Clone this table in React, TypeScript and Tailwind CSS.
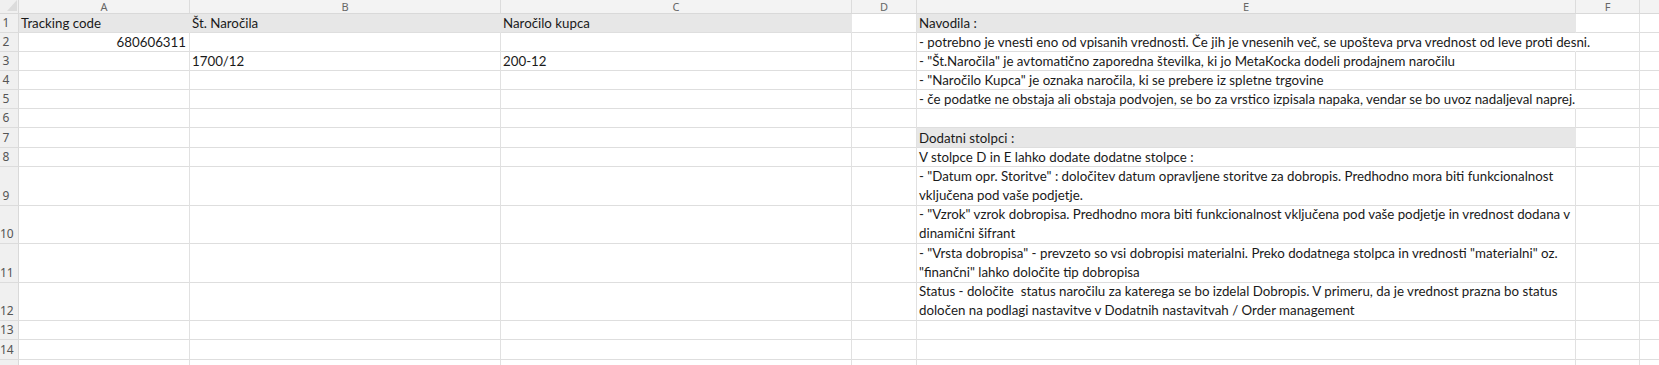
import React from "react";

type Cell = {
  text?: string;
  lines?: string[];
  fill?: boolean;
  right?: boolean;
  overflow?: boolean;
};

type Row = {
  n: number;
  label: boolean;
  h: string;
  cells: Record<string, Cell>;
};

const colDefs: { key: string; w: string }[] = [
  { key: "A", w: "w-[171px]" },
  { key: "B", w: "w-[311px]" },
  { key: "C", w: "w-[351px]" },
  { key: "D", w: "w-[65px]" },
  { key: "E", w: "w-[659px]" },
  { key: "F", w: "w-[64px]" },
];

const rows: Row[] = [
  {
    n: 1,
    label: true,
    h: "h-[19px]",
    cells: {
      A: { text: "Tracking code", fill: true },
      B: { text: "Št. Naročila", fill: true },
      C: { text: "Naročilo kupca", fill: true },
      E: { text: "Navodila :", fill: true },
    },
  },
  {
    n: 2,
    label: true,
    h: "h-[19px]",
    cells: {
      A: { text: "680606311", right: true },
      E: {
        text: "- potrebno je vnesti eno od vpisanih vrednosti. Če jih je vnesenih več, se upošteva prva vrednost od leve proti desni.",
        overflow: true,
      },
    },
  },
  {
    n: 3,
    label: true,
    h: "h-[19px]",
    cells: {
      B: { text: "1700/12" },
      C: { text: "200-12" },
      E: {
        text: '- "Št.Naročila" je avtomatično zaporedna številka, ki jo MetaKocka dodeli prodajnem naročilu',
      },
    },
  },
  {
    n: 4,
    label: true,
    h: "h-[19px]",
    cells: {
      E: { text: '- "Naročilo Kupca" je oznaka naročila, ki se prebere iz spletne trgovine' },
    },
  },
  {
    n: 5,
    label: true,
    h: "h-[19px]",
    cells: {
      E: {
        text: "- če podatke ne obstaja ali obstaja podvojen, se bo za vrstico izpisala napaka, vendar se bo uvoz nadaljeval naprej.",
        overflow: true,
      },
    },
  },
  { n: 6, label: true, h: "h-[19px]", cells: {} },
  {
    n: 7,
    label: true,
    h: "h-[20px]",
    cells: { E: { text: "Dodatni stolpci :", fill: true } },
  },
  {
    n: 8,
    label: true,
    h: "h-[19px]",
    cells: { E: { text: "V stolpce D in E lahko dodate dodatne stolpce :" } },
  },
  {
    n: 9,
    label: true,
    h: "h-[39px]",
    cells: {
      E: {
        lines: [
          '- "Datum opr. Storitve" : določitev datum opravljene storitve za dobropis. Predhodno mora biti funkcionalnost',
          "vključena pod vaše podjetje.",
        ],
      },
    },
  },
  {
    n: 10,
    label: true,
    h: "h-[38px]",
    cells: {
      E: {
        lines: [
          '- "Vzrok" vzrok dobropisa. Predhodno mora biti funkcionalnost vključena pod vaše podjetje in vrednost dodana v',
          "dinamični šifrant",
        ],
      },
    },
  },
  {
    n: 11,
    label: true,
    h: "h-[39px]",
    cells: {
      E: {
        lines: [
          '- "Vrsta dobropisa" - prevzeto so vsi dobropisi materialni. Preko dodatnega stolpca in vrednosti "materialni" oz.',
          '"finančni" lahko določite tip dobropisa',
        ],
      },
    },
  },
  {
    n: 12,
    label: true,
    h: "h-[38px]",
    cells: {
      E: {
        lines: [
          "Status - določite\u00a0 status naročilu za katerega se bo izdelal Dobropis. V primeru, da je vrednost prazna bo status",
          "določen na podlagi nastavitve v Dodatnih nastavitvah / Order management",
        ],
      },
    },
  },
  { n: 13, label: true, h: "h-[19px]", cells: {} },
  { n: 14, label: true, h: "h-[20px]", cells: {} },
  { n: 15, label: false, h: "h-[19px]", cells: {} },
];

function DataCell({ w, cell }: { w: string; cell?: Cell }) {
  const fill = cell?.fill;
  const overflow = cell?.overflow;
  return (
    <div
      className={`${w} shrink-0 h-full flex flex-col justify-end border-b border-b-[#dedede] border-r ${
        fill
          ? "bg-[#e7e7e7] border-r-[#e7e7e7]"
          : overflow
          ? "border-r-transparent"
          : "border-r-[#e1e1e1]"
      } px-[2px] ${overflow ? "relative z-10 overflow-visible" : "overflow-hidden"}`}
    >
      {cell?.text !== undefined && (
        <div
          className={`whitespace-pre leading-[18px] ${cell.right ? "text-right pr-[1px]" : ""}`}
        >
          {cell.text}
        </div>
      )}
      {cell?.lines &&
        cell.lines.map((l, i) => (
          <div key={i} className="whitespace-pre leading-[19px]">
            {l}
          </div>
        ))}
    </div>
  );
}

export default function App() {
  return (
    <div className="w-[1659px] h-[365px] overflow-hidden bg-white text-[#1a1a1a] font-['Lato',sans-serif] text-[13.3px]">
      {/* column header row */}
      <div className="flex h-[14px] bg-[#f3f3f3] border-b border-[#d9d9d9] font-['Noto_Sans',sans-serif] text-[11px] text-[#666]">
        <div className="w-[19px] shrink-0 relative border-r border-[#d9d9d9] bg-[#f0f0f0]">
          <svg className="absolute left-[7px] top-0" width="10" height="11" viewBox="0 0 10 11">
            <polygon points="10,0 10,11 0,11" fill="#dcdcdc" />
          </svg>
        </div>
        {colDefs.map((c) => (
          <div
            key={c.key}
            className={`${c.w} shrink-0 flex items-center justify-center border-r border-[#dcdcdc] leading-none`}
          >
            {c.key}
          </div>
        ))}
        <div className="flex-1" />
      </div>
      {rows.map((r) => (
        <div key={r.n} className={`flex ${r.h}`}>
          <div className="w-[19px] shrink-0 h-full bg-[#f0f0f0] border-r border-r-[#d9d9d9] border-b border-b-[#dcdcdc] flex items-end font-['Noto_Sans',sans-serif] text-[12px] text-[#555] leading-none pb-[3px]">
            <span className="w-[12px] text-center">{r.label ? r.n : ""}</span>
          </div>
          {colDefs.map((c) => (
            <DataCell key={c.key} w={c.w} cell={r.cells[c.key]} />
          ))}
          <div className="flex-1 h-full border-b border-b-[#dedede]" />
        </div>
      ))}
    </div>
  );
}
